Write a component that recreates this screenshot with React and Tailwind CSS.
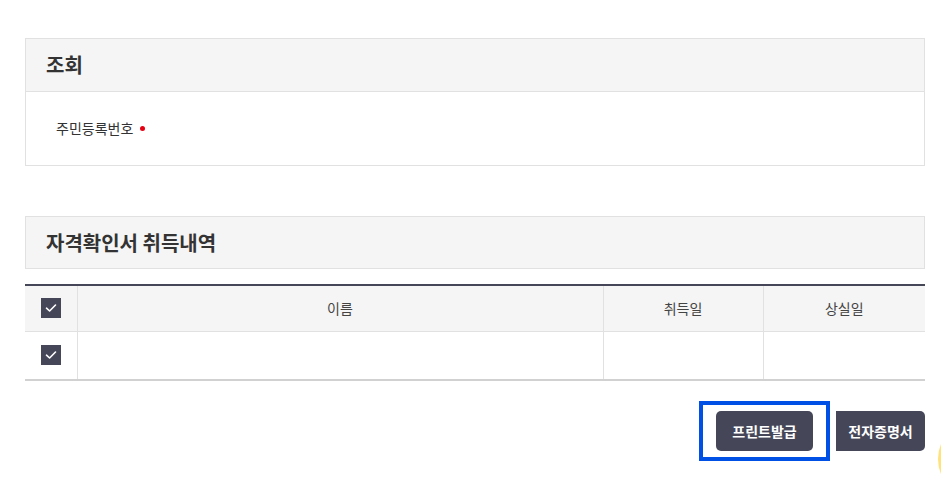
const Check = () => (
  <span className="inline-flex w-5 h-5 items-center justify-center bg-[#454759]">
    <svg width="12" height="10" viewBox="0 0 12 10" fill="none">
      <path d="M1.5 5.2 L4.6 8 L10.5 2" stroke="#fff" strokeWidth="1.6" strokeLinecap="round" strokeLinejoin="round" />
    </svg>
  </span>
);

export default function App() {
  return (
    <div className="relative w-[941px] h-[495px] overflow-hidden bg-white font-['Noto_Sans_CJK_KR','Noto_Sans',sans-serif] text-[#333]">
      <div className="w-[900px] ml-[25px] pt-[38px]">
        {/* 조회 */}
        <section className="border border-[#e1e1e1]">
          <div className="h-[53px] bg-[#f5f5f5] border-b border-[#e1e1e1] flex items-center pl-[20px]">
            <h2 className="text-[20px] font-bold text-[#333] leading-none">조회</h2>
          </div>
          <div className="h-[73px] flex items-center pl-[30px]">
            <span className="text-[14px] text-[#333]">주민등록번호</span>
            <span className="ml-[7px] w-[5px] h-[5px] rounded-full bg-[#e60012]"></span>
          </div>
        </section>

        {/* 자격확인서 취득내역 */}
        <section className="mt-[50px] border border-[#e1e1e1] h-[53px] bg-[#f5f5f5] flex items-center pl-[20px]">
          <h2 className="text-[20px] font-bold text-[#333] leading-none">자격확인서 취득내역</h2>
        </section>

        <table className="mt-[15px] w-full border-collapse border-t-2 border-t-[#454759] border-b-2 border-b-[#d1d1d1] text-[14px] text-[#444]">
          <colgroup>
            <col className="w-[52px]" />
            <col className="w-[526px]" />
            <col className="w-[160px]" />
            <col />
          </colgroup>
          <thead>
            <tr className="h-[46px] bg-[#f5f5f5] border-b border-[#e1e1e1]">
              <th className="font-normal text-center align-middle"><div className="flex justify-center"><Check /></div></th>
              <th className="font-normal border-l border-[#e1e1e1]">이름</th>
              <th className="font-normal border-l border-[#e1e1e1]">취득일</th>
              <th className="font-normal border-l border-[#e1e1e1]">상실일</th>
            </tr>
          </thead>
          <tbody>
            <tr className="h-[49px]">
              <td><div className="flex justify-center"><Check /></div></td>
              <td className="border-l border-[#e1e1e1]"></td>
              <td className="border-l border-[#e1e1e1]"></td>
              <td className="border-l border-[#e1e1e1]"></td>
            </tr>
          </tbody>
        </table>

        <div className="mt-[20px] flex justify-end items-center">
          <div className="border-4 border-[#0050e6] px-[13px] py-[6px]">
            <button className="w-[97px] h-[40px] rounded-[5px] bg-[#454759] text-white text-[14px] font-bold">프린트발급</button>
          </div>
          <button className="ml-[6px] w-[89px] h-[40px] rounded-r-[5px] bg-[#454759] text-white text-[14px] font-bold">전자증명서</button>
        </div>
      </div>

      <div className="absolute left-[938px] top-[420px] w-[78px] h-[78px] rounded-full bg-[#ffe27a]"></div>
    </div>
  );
}
